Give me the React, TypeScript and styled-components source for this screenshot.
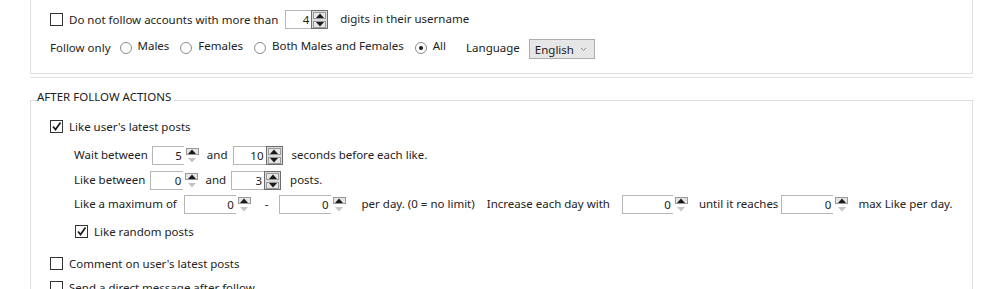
import styled, { createGlobalStyle } from 'styled-components'

const GlobalStyle = createGlobalStyle`
  html, body {
    margin: 0;
    padding: 0;
    background: #fff;
  }
  body {
    font-family: 'Noto Sans', 'Open Sans', sans-serif;
    font-size: 11.5px;
    color: #222;
  }
`

type SpinState = 'hot' | 'min'

function Arrow({ up, on }: { up?: boolean; on: boolean }) {
	return (
		<svg width="8" height="5" viewBox="0 0 8 5">
			<path d={up ? 'M0 5 L4 0.5 L8 5 Z' : 'M0 0 L4 4.5 L8 0 Z'} fill={on ? '#1a1a1a' : '#c4c4c4'} />
		</svg>
	)
}

function Spinner({ value, width, state = 'min' }: { value: number; width: number; state?: SpinState }) {
	const hot = state === 'hot'
	return (
		<SpinBox $w={width}>
			<SpinValue>{value}</SpinValue>
			<SpinButtons $hot={hot}>
				<SpinButton $framed><Arrow up on /></SpinButton>
				<SpinButton $framed={hot}><Arrow on={hot} /></SpinButton>
			</SpinButtons>
		</SpinBox>
	)
}

function Check({ checked, label, indent = 0 }: { checked?: boolean; label: string; indent?: number }) {
	return (
		<CheckLabel $indent={indent}>
			<CheckBox>
				{checked && (
					<svg width="11" height="11" viewBox="0 0 11 11">
						<path d="M2 5.5 L4.5 8.5 L9.5 1.5" fill="none" stroke="#1a1a1a" strokeWidth="1.7" />
					</svg>
				)}
			</CheckBox>
			{label}
		</CheckLabel>
	)
}

function Radio({ checked, label }: { checked?: boolean; label: string }) {
	return (
		<RadioLabel>
			<RadioDot $on={checked} />
			{label}
		</RadioLabel>
	)
}

function App() {
	return (
		<>
			<GlobalStyle />
			<Page>
				<OpenGroup>
					<Row>
						<Check label="Do not follow accounts with more than" />
						<Gap $w={7} />
						<Spinner value={4} width={43} state="hot" />
						<Gap $w={12} />
						<Text>digits in their username</Text>
					</Row>
					<Row $mt={8} $h={22}>
						<Text>Follow only</Text>
						<Radios>
							<Radio label="Males" />
							<Radio label="Females" />
							<Radio label="Both Males and Females" />
							<Radio checked label="All" />
						</Radios>
						<Gap $w={20} />
						<Text>Language</Text>
						<Gap $w={9} />
						<Select>
							English
							<svg width="7" height="5" viewBox="0 0 7 5">
								<path d="M1 1 L3.5 3.5 L6 1" fill="none" stroke="#8a8a8a" strokeWidth="1" />
							</svg>
						</Select>
					</Row>
				</OpenGroup>
				<Rule />
				<Group>
					<Legend>AFTER FOLLOW ACTIONS</Legend>
					<Row $mt={6}>
						<Check checked label="Like user's latest posts" />
					</Row>
					<Row $mt={9} $indent={24}>
						<Text>Wait between</Text>
						<Gap $w={4} />
						<Spinner value={5} width={49} />
						<Gap $w={6} />
						<Text>and</Text>
						<Gap $w={5} />
						<Spinner value={10} width={50} state="hot" />
						<Gap $w={9} />
						<Text>seconds before each like.</Text>
					</Row>
					<Row $mt={5} $indent={24}>
						<Text>Like between</Text>
						<Gap $w={5} />
						<Spinner value={0} width={50} />
						<Gap $w={5} />
						<Text>and</Text>
						<Gap $w={5} />
						<Spinner value={3} width={50} state="hot" />
						<Gap $w={9} />
						<Text>posts.</Text>
					</Row>
					<Row $mt={4} $indent={24}>
						<Text>Like a maximum of</Text>
						<Gap $w={7} />
						<Spinner value={0} width={69} />
						<Gap $w={12} />
						<Text>-</Text>
						<Gap $w={10} />
						<Spinner value={0} width={69} />
						<Gap $w={14} />
						<Text>per day. (0 = no limit)</Text>
						<Gap $w={12} />
						<Text>Increase each day with</Text>
						<Gap $w={12} />
						<Spinner value={0} width={68} />
						<Gap $w={9} />
						<Text>until it reaches</Text>
						<Gap $w={3} />
						<Spinner value={0} width={69} />
						<Gap $w={8} />
						<Text>max Like per day.</Text>
					</Row>
					<Row $mt={7}>
						<Check checked indent={25} label="Like random posts" />
					</Row>
					<Row $mt={12}>
						<Check label="Comment on user's latest posts" />
					</Row>
					<Row $mt={4}>
						<Check label="Send a direct message after follow" />
					</Row>
				</Group>
			</Page>
		</>
	)
}

export default App

const Page = styled.div`
	padding-left: 30px;
	width: 943px;
`

const OpenGroup = styled.div`
	height: 64px;
	padding: 9px 0 0 19px;
	border: 1px solid #dedede;
	border-top: none;
`

const Rule = styled.div`
	margin-top: 3px;
	height: 1px;
	background: #e4e4e4;
`

const Group = styled.fieldset`
	margin: 12px 0 0;
	padding: 0 0 0 19px;
	border: 1px solid #dedede;
	border-bottom: none;
	min-height: 200px;
`

const Legend = styled.legend`
	margin-left: -13px;
	padding: 0 3px 6px 0;
	font-size: 11.5px;
	line-height: 14px;
	color: #222;
`

const Row = styled.div<{ $mt?: number; $h?: number; $indent?: number }>`
	display: flex;
	align-items: center;
	height: ${p => p.$h ?? 20}px;
	margin-top: ${p => p.$mt ?? 0}px;
	padding-left: ${p => p.$indent ?? 0}px;
	white-space: nowrap;
`

const Gap = styled.span<{ $w: number }>`
	flex: none;
	width: ${p => p.$w}px;
`

const Text = styled.span`
	line-height: 16px;
`

const CheckLabel = styled.label<{ $indent: number }>`
	display: flex;
	align-items: center;
	gap: 6px;
	margin-left: ${p => p.$indent}px;
`

const CheckBox = styled.span`
	box-sizing: border-box;
	width: 13px;
	height: 13px;
	border: 1px solid #333;
	background: #fff;
	display: flex;
	align-items: center;
	justify-content: center;
`

const Radios = styled.div`
	display: flex;
	align-items: center;
	gap: 11px;
	margin-left: 9px;
	margin-top: -5px;
`

const RadioLabel = styled.label`
	display: flex;
	align-items: center;
	gap: 6px;
	& > span {
		margin-top: 5px;
	}
`

const RadioDot = styled.span<{ $on?: boolean }>`
	position: relative;
	box-sizing: border-box;
	width: 12px;
	height: 12px;
	border: 1px solid #8c8c8c;
	border-radius: 50%;
	background: #fff;
	&::after {
		content: '';
		display: ${p => (p.$on ? 'block' : 'none')};
		position: absolute;
		left: 3px;
		top: 3px;
		width: 4px;
		height: 4px;
		border-radius: 50%;
		background: #1a1a1a;
	}
`

const Select = styled.div`
	box-sizing: border-box;
	display: flex;
	align-items: center;
	justify-content: space-between;
	width: 66px;
	height: 20px;
	padding: 0 7px 0 5px;
	margin-top: 2px;
	border: 1px solid #adadad;
	background: #e6e6e6;
`

const SpinBox = styled.div<{ $w: number }>`
	box-sizing: border-box;
	display: flex;
	flex: none;
	width: ${p => p.$w}px;
	height: 19px;
	border: 1px solid #b5b5b5;
	background: #fff;
`

const SpinValue = styled.span`
	flex: 1;
	text-align: right;
	padding-right: 2px;
	line-height: 17px;
`

const SpinButtons = styled.div<{ $hot: boolean }>`
	display: flex;
	flex-direction: column;
	width: 15px;
	background: ${p => (p.$hot ? '#dcdcdc' : '#fff')};
	border: 1px solid ${p => (p.$hot ? '#6d6d6d' : 'transparent')};
	margin: -1px -1px -1px 0;
`

const SpinButton = styled.div<{ $framed?: boolean }>`
	flex: 1;
	display: flex;
	align-items: center;
	justify-content: center;
	background: ${p => (p.$framed ? '#e6e6e6' : '#fff')};
	border: 1px solid ${p => (p.$framed ? '#9a9a9a' : 'transparent')};
	margin: 1px;
	box-sizing: border-box;
`
